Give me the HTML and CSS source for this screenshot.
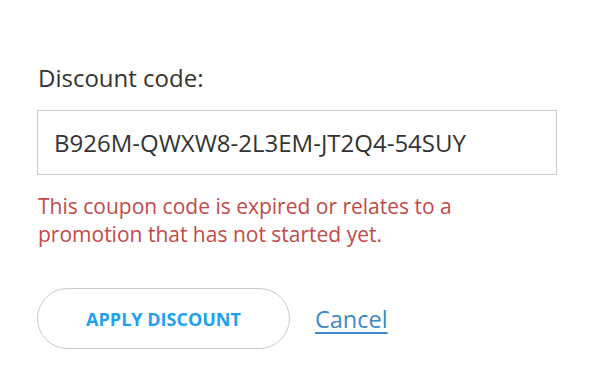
FILE: index.html
```html
<!DOCTYPE html>
<html>
<head>
<meta charset="utf-8">
<link rel="stylesheet" href="styles.css">
</head>
<body>
<form class="discount">
  <label class="label" for="code">Discount code:</label>
  <input class="code-input" id="code" type="text" value="B926M-QWXW8-2L3EM-JT2Q4-54SUY">
  <p class="error">This coupon code is expired or relates to a promotion that has not started yet.</p>
  <div class="actions">
    <button type="button" class="apply">APPLY DISCOUNT</button>
    <a class="cancel" href="#">Cancel</a>
  </div>
</form>
</body>
</html>
```

FILE: styles.css
```css
html, body {
  margin: 0;
  padding: 0;
  background: #fff;
}
body {
  font-family: "Open Sans", sans-serif;
  color: #333;
}
.discount {
  display: flex;
  flex-direction: column;
  padding: 62px 38px 0 37px;
  width: 520px;
}
.label {
  font-size: 24px;
  line-height: 32px;
  color: #333;
  padding-left: 1px;
}
.code-input {
  margin-top: 16px;
  box-sizing: border-box;
  width: 520px;
  height: 65px;
  border: 1px solid #ccc;
  padding: 0 16px;
  font-family: "Open Sans", sans-serif;
  font-size: 24px;
  color: #333;
  outline: none;
}
.error {
  margin: 17px 0 0 1px;
  font-size: 21px;
  line-height: 28px;
  color: #c14a4a;
  width: 500px;
}
.actions {
  display: flex;
  align-items: center;
  gap: 25px;
  margin-top: 40px;
}
.apply {
  box-sizing: border-box;
  width: 253px;
  height: 61px;
  border: 1px solid #ccc;
  border-radius: 31px;
  background: #fff;
  font-family: "Open Sans", sans-serif;
  font-weight: 700;
  font-size: 18px;
  color: #1da1f2;
  cursor: pointer;
}
.cancel {
  font-size: 23.5px;
  color: #3d88c9;
  text-decoration: underline;
  text-underline-offset: 4px;
}
```
